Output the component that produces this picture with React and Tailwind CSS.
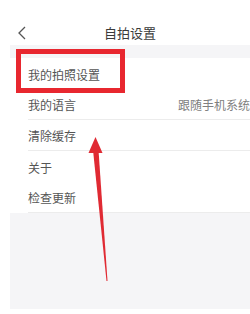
import React from 'react';

const rows = [
  { label: '我的拍照设置' },
  { label: '我的语言', value: '跟随手机系统', line: true },
  { label: '清除缓存', line: true },
  { label: '关于' },
  { label: '检查更新', line: true },
];

const App = () => {
  return (
    <div
      className="relative w-[250px] h-[314px] overflow-hidden bg-white"
      style={{ fontFamily: '"Noto Sans CJK SC", "Noto Sans", sans-serif' }}
    >
      <div className="pl-[10px]">
        {/* Header */}
        <div className="relative flex h-[45px] items-center justify-center pt-[20px]">
          <svg
            className="absolute left-[7px] top-[26px]"
            width="10"
            height="14"
            viewBox="0 0 10 14"
            fill="none"
            stroke="#555"
            strokeWidth="1.3"
          >
            <path d="M8 1 L2 7 L8 13" />
          </svg>
          <span className="text-[13px] text-[#3a3a3a]">自拍设置</span>
        </div>

        {/* Gap strip */}
        <div className="h-[13px] bg-[#f5f5f7]" />

        {/* List */}
        <div className="bg-white">
          {rows.map((r, i) => (
            <div key={i} className="pl-[18px]">
              <div
                className={`flex h-[31px] items-center justify-between pt-[2px] ${
                  r.line ? 'border-b border-[#ececec]' : ''
                }`}
              >
                <span className="text-[12px] text-[#555]">{r.label}</span>
                {r.value && <span className="text-[12px] text-[#808080]">{r.value}</span>}
              </div>
            </div>
          ))}
        </div>

        <div className="h-[96px] bg-[#f5f5f7]" />
      </div>

      {/* Highlight box */}
      <div className="absolute left-[16px] top-[49px] h-[44px] w-[109px] border-[5px] border-[#e8272f]" />

      {/* Arrow */}
      <svg className="absolute left-0 top-0" width="250" height="314" viewBox="0 0 250 314">
        <polygon points="93,150 98.5,150 107.5,281 106.5,281" fill="#e02a33" />
        <polygon points="88.5,153 95.5,137 102.5,153" fill="#e02a33" />
      </svg>
    </div>
  );
};

export default App;
